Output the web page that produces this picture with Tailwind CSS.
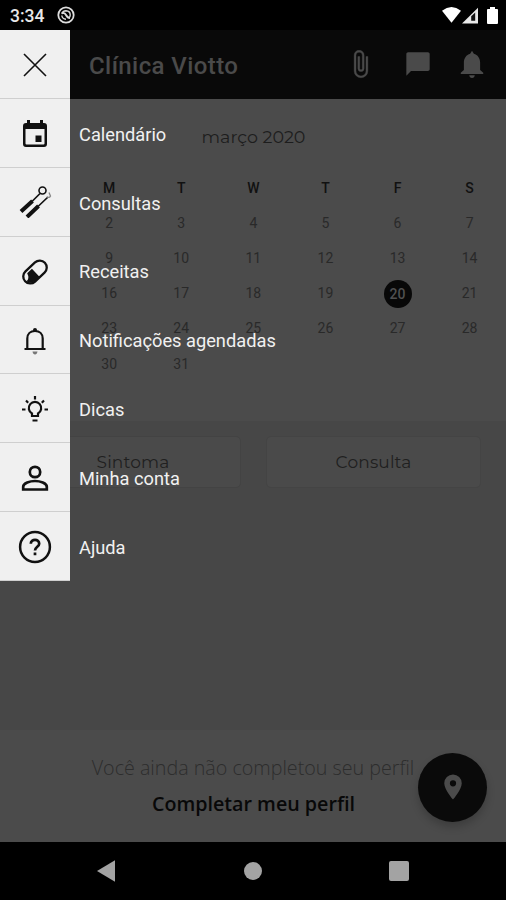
<!DOCTYPE html>
<html lang="pt-BR">
<head>
<meta charset="utf-8">
<title>Clínica Viotto</title>
<script src="https://cdn.jsdelivr.net/npm/@tailwindcss/browser@4"></script>
</head>
<body class="bg-black">
<div class="relative w-[506px] h-[900px] overflow-hidden flex flex-col bg-black font-['Roboto',sans-serif]">
  <!-- Status bar -->
  <div class="h-[30px] shrink-0 flex items-center pl-[10px] pr-[8px] text-[#e8e8e8]">
    <span class="text-[17.5px] leading-[30px] font-medium w-[47px] pt-[2px]">3:34</span>
    <svg class="w-[18px] h-[18px]" viewBox="0 0 18 18" fill="none" stroke="#ddd"><circle cx="9" cy="9" r="7.7" stroke-width="1.8"/><path d="M5 7.500Q6 4.800 9 4.800q4.200.2 4.200 4.200 0 1.500-.8 2.500M4.800 9.500q.4 3.500 4.200 3.700" stroke-width="1.400"/><path d="M4.500 7.500q3-1.500 4.500 1.500t4 3" stroke-width="1.900"/></svg>
    <div class="ml-auto flex items-center">
      <svg class="w-[19px] h-[16px]" viewBox="0 0 19 16" fill="#fff"><path d="M0 3.8Q9.5-3.6 19 3.8L9.5 15.8z"/></svg>
      <svg class="w-[17px] h-[17px] ml-px" viewBox="0 0 17 17"><path d="M0 16.5 16 .8v15.7z" fill="#e8e8e8"/><path d="M9.2 13.7V9.2l4-3.7v8.2z" fill="#111"/></svg>
      <svg class="w-[11px] h-[17px] ml-[8px]" viewBox="0 0 11 18" preserveAspectRatio="none" fill="#fff"><path d="M3 0h5v2h2q1 0 1 1v14q0 1-1 1H1q-1 0-1-1V3q0-1 1-1h2z"/></svg>
    </div>
  </div>
  <!-- App bar -->
  <header class="h-[69px] shrink-0 bg-[#090909] flex items-center pl-[89px] pr-[19px] text-[#4a4a4a]">
    <h1 class="text-[24px] leading-[30px] font-medium tracking-[0.420px] pt-[3px] whitespace-nowrap">Clínica Viotto</h1>
    <div class="ml-auto flex items-center">
      <svg class="w-[30px] h-[30px] mr-[27px]" viewBox="0 0 24 24" fill="currentColor"><path stroke="currentColor" stroke-width=".3" d="M16.500 6v11.500a4 4 0 0 1-8 0V5a2.500 2.500 0 0 1 5 0v10.500a1 1 0 0 1-2 0V6H10v9.500a2.500 2.500 0 0 0 5 0V5a4 4 0 0 0-8 0v12.500a5.500 5.500 0 0 0 11 0V6z" transform="translate(-1.300 -.8)"/></svg>
      <svg class="w-[28px] h-[28px] mr-[25px] -mt-[2px]" viewBox="0 0 24 24" fill="currentColor"><path d="M20.500 2h-17C2.700 2 2 2.700 2 3.500V22l4-4h14.500c.8 0 1.500-.7 1.500-1.500v-13c0-.8-.7-1.500-1.500-1.500z"/></svg>
      <svg class="w-[30px] h-[32px] -mt-[2px]" viewBox="0 0 24 24" preserveAspectRatio="none" fill="currentColor"><path d="M12 22.500c1.200 0 2.200-.9 2.200-2H9.800c0 1.100 1 2 2.200 2zM18.500 16.500V11c0-3.200-2-5.900-5-6.600L12 2l-1.500 2.400c-3 .7-5 3.400-5 6.600v5.500l-2.500 2v1h18v-1z"/></svg>
    </div>
  </header>
  <!-- Calendar -->
  <section class="h-[322px] shrink-0 bg-[#4b4b4b] pt-[24px]">
    <p class="text-center h-[28px] leading-[28px] text-[17.500px] pl-px font-['Montserrat','Inter',sans-serif] text-[#1d1d1d] font-normal">março 2020</p>
    <div class="mt-[19.500px] grid grid-cols-[repeat(7,72.100px)] auto-rows-[35.200px] items-center text-center px-px text-[14px] text-[#292929]">
      <b class="contents font-medium text-[#111]"><span></span><span>M</span><span>T</span><span>W</span><span>T</span><span>F</span><span>S</span></b>
      <span></span><span>2</span><span>3</span><span>4</span><span>5</span><span>6</span><span>7</span>
      <span></span><span>9</span><span>10</span><span>11</span><span>12</span><span>13</span><span>14</span>
      <span></span><span>16</span><span>17</span><span>18</span><span>19</span><span class="mx-auto size-[28px] rounded-full bg-[#080808] leading-[28px] text-[#505050] font-medium">20</span><span>21</span>
      <span></span><span>23</span><span>24</span><span>25</span><span>26</span><span>27</span><span>28</span>
      <span></span><span>30</span><span>31</span>
    </div>
  </section>
  <!-- Shortcuts -->
  <section class="h-[309px] shrink-0 bg-[#474747] pt-[15px] px-[25px] flex items-start gap-[25px] font-['Montserrat','Inter',sans-serif] text-[17px] tracking-[0.150px] text-[#202020]">
    <div class="w-[216px] h-[52px] pt-[2px] rounded-[5px] bg-[#4a4a4a] border border-[#434343] flex items-center justify-center">Sintoma</div>
    <div class="w-[215px] h-[52px] pt-[2px] rounded-[5px] bg-[#4a4a4a] border border-[#444] flex items-center justify-center">Consulta</div>
  </section>
  <!-- Profile prompt -->
  <section class="relative h-[112px] shrink-0 bg-[#4b4b4b] pt-[25px] text-center font-['Open_Sans',sans-serif]">
    <p class="text-[19.700px] leading-[26px] font-light text-[#2d2d2d]"><span>Você ainda não completou seu perfil</span></p>
    <p class="mt-[10px] pl-px text-[19.700px] leading-[26px] font-semibold text-[#080808]"><span>Completar meu perfil</span></p>
    <div class="absolute left-[418px] top-[23px] size-[69px] rounded-full bg-[#0a0a0a] shadow-[0_5px_8px_rgba(0,0,0,0.2)] flex items-center justify-center">
      <svg class="w-[30px] h-[30px] -mt-[2px]" viewBox="0 0 24 24" fill="#4b4b4b"><path d="M12 2a7 7 0 0 0-7 7c0 5.250 7 13 7 13s7-7.750 7-13a7 7 0 0 0-7-7zm0 9.500a2.500 2.500 0 1 1 0-5 2.500 2.500 0 0 1 0 5z"/></svg>
    </div>
  </section>
  <!-- System navigation -->
  <nav class="h-[58px] shrink-0 flex items-center gap-[129px] pl-[97px]">
    <svg class="w-[18px] h-[22px]" viewBox="0 0 18 22" fill="#a3a3a3"><path d="M0 11 18 .3v21.400z"/></svg>
    <div class="size-[18px] rounded-full bg-[#a3a3a3]"></div>
    <div class="size-[20px] rounded-[2px] bg-[#a3a3a3] -ml-[2px]"></div>
  </nav>

  <!-- Drawer -->
  <aside class="absolute left-0 top-[30px] w-[300px] text-[18.250px] text-[#f1f1f1] [&>div]:flex [&>div]:items-center [&>div]:h-[68.900px] [&>div>i]:w-[70px] [&>div>i]:h-full [&>div>i]:mr-[9px] [&>div>i]:shrink-0 [&>div>i]:flex [&>div>i]:items-center [&>div>i]:justify-center [&>div>i]:pt-[2px] [&>div>i]:bg-[#f0f0f0] [&>div>i]:border-b [&>div>i]:border-[#cfcfcf] [&_span]:whitespace-nowrap [&_span]:pt-[2px] [&_svg]:text-[#111]">
    <div><i><svg class="w-[24px] h-[24px]" viewBox="0 0 24 24" stroke="currentColor" stroke-width="1.600"><path d="M1 1l22 22M23 1 1 23"/></svg></i></div>
    <div><i><svg class="w-[24px] h-[28px]" viewBox="0 0 24 28" fill="currentColor"><path d="M4 0h3v3h10V0h3v3h1q3 0 3 3v18q0 3-3 3H3q-3 0-3-3V6q0-3 3-3h1zM2.500 9v14.500q0 1 1 1h17q1 0 1-1V9zM12.500 15.500h6V22h-6z" fill-rule="evenodd"/></svg></i><span>Calendário</span></div>
    <div><i><svg class="w-[34px] h-[34px] -mt-[3px]" viewBox="0 0 34 34" fill="none" stroke="currentColor"><path d="M3 27.500 14.500 17M9 33 20.500 22" stroke-width="4"/><path d="M14 17.500l8-8M20 22.500l10-9.500" stroke-width="1.700"/><circle cx="24.500" cy="6.500" r="3.500" stroke-width="1.600"/><path d="M28.500 13q3.500 1 4-1l-1.500-3.500" stroke="#888" stroke-width="1.300"/></svg></i><span>Consultas</span></div>
    <div><i><svg class="w-[30px] h-[30px]" viewBox="0 0 30 30"><g transform="rotate(-43 15 15)"><rect x="1.500" y="8" width="27" height="14" rx="7" fill="none" stroke="currentColor" stroke-width="2.300"/><path d="M15 10.500v11H8a6.500 6.500 0 0 1-5.500-5.500q4.500 0 6-5.500z" fill="currentColor"/></g></svg></i><span>Receitas</span></div>
    <div><i><svg class="w-[24px] h-[28px]" viewBox="0 0 24 28" fill="none" stroke="currentColor"><path d="M1.500 22h21M4.300 21.500V11.500C4.300 7 7.500 4 12 4s7.700 3 7.700 7.500v10" stroke-width="2.200"/><circle cx="12" cy="3" r="2" fill="currentColor" stroke="none"/><path d="M9.500 24.500h5q-.5 3-2.500 3t-2.500-3" fill="#777" stroke="none"/></svg></i><span>Notificações agendadas</span></div>
    <div><i><svg class="w-[28px] h-[28px]" viewBox="0 0 28 28" fill="none" stroke="currentColor" stroke-width="2.200"><path d="M11 21v-2.500a6.200 6.200 0 1 1 6 0V21zM11.500 25.500h5M1 14.500h3.500M23.500 14.500H27M14 1v3.500M5 5.500l2.200 2.200M23 5.500l-2.200 2.200"/></svg></i><span>Dicas</span></div>
    <div><i><svg class="w-[28px] h-[28px]" viewBox="0 0 28 28" fill="none" stroke="currentColor" stroke-width="2.700"><circle cx="14" cy="8" r="5.200"/><path d="M2.200 25.500v-2.800C2.200 19 9 17 14 17s11.800 2 11.800 5.700v2.800z"/></svg></i><span>Minha conta</span></div>
    <div><i><svg class="w-[34px] h-[34px]" viewBox="0 0 34 34" fill="none" stroke="currentColor"><circle cx="17" cy="17" r="14.900" stroke-width="2.500"/><path d="M12.800 13.700c0-5.200 8.400-5.200 8.400 0 0 3-4.200 3.200-4.200 6.800M17 22.500v2.700" stroke-width="2.700"/></svg></i><span>Ajuda</span></div>
  </aside>
</div>
</body>
</html>
